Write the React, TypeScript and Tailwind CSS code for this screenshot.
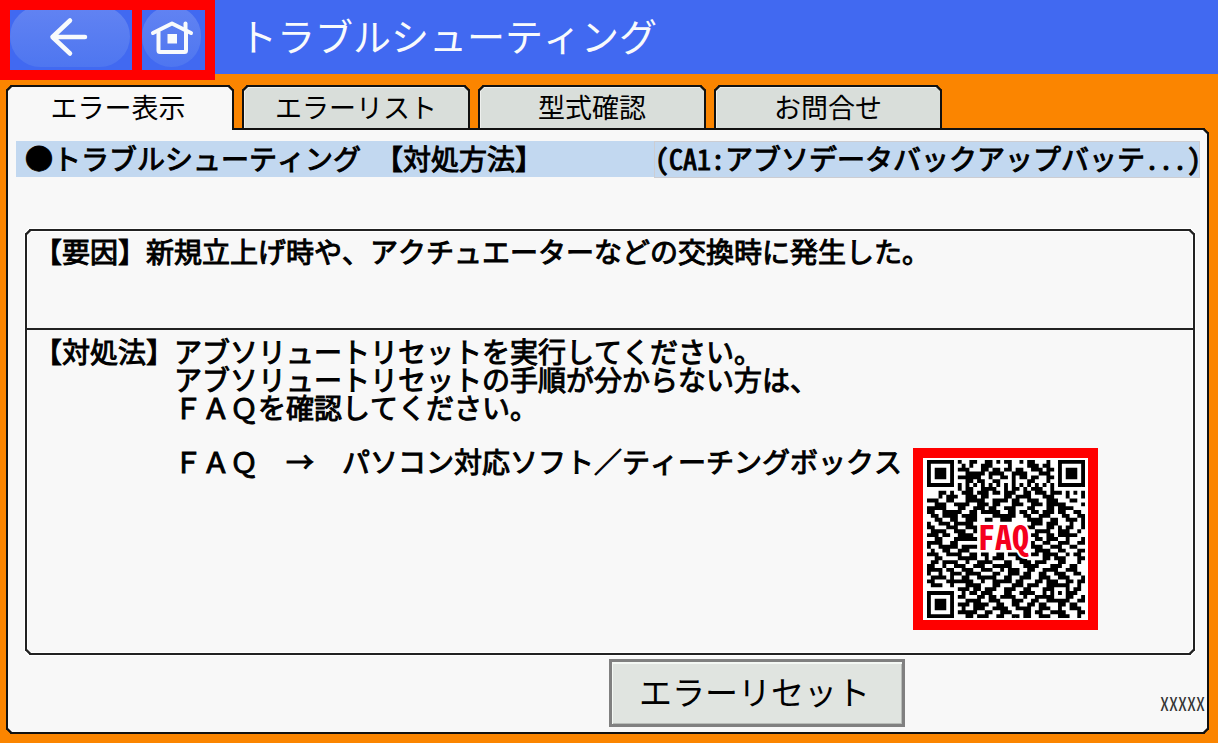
import React from "react";

const QR_ROWS = [
  "11111110100110011010110010110001001111111",
  "10000010010100111000010000111011001000001",
  "10111010111000110110110110011101101011101",
  "10111010001111101111001111000111001011101",
  "10111010111111001001101011011001101011101",
  "10000010001101100110001000110001001000001",
  "11111110101010101010101010101010101111111",
  "00000000101100111100101101011100100000000",
  "00011010011101110110111001101110111010101",
  "00010111001110110000110111100011100010001",
  "11100110001111100111101100111001110001100",
  "00111001111001110110001110011101111100001",
  "11111000110011101100111000110001101111000",
  "11001111100110111110011011011011101100110",
  "01101111011110000111111001100111000110011",
  "00110011001110011001110000111100110011101",
  "10011101111100000000000000011101110001001",
  "11000111001110000000000000110001101011001",
  "01111001110010000000000000001111001110010",
  "11101100111100000000000000011001101111100",
  "00110001111110000000000000001101110010001",
  "11110011000000000000000000010011001110011",
  "10011111011110000000000000011100111001100",
  "01001100111000000000000000001111001100011",
  "11100111100110110011011110011011110010110",
  "00110000111110010111000111000011011100011",
  "01101111001001111000110011101110001100010",
  "11001001110011100111110001111000111001100",
  "11110110011100111001011100110011110011100",
  "10010011101111000110011101100110011100110",
  "01111010011001111100110011100111001110001",
  "11000111111100100111110110001101110011011",
  "01110010001111000110001110111001111110010",
  "00000000111011011100111001100011100010110",
  "11111110010110111000110011110010101011100",
  "10000010110001101101111001001111100011001",
  "10111010001111001110001110011001111110011",
  "10111010111011110011001100110110001101100",
  "10111010010011100111100111100111001001110",
  "10000010111110011001110001101100111100011",
  "11111110001101110011001101100111001110010",
];

const QR_PATH = QR_ROWS.map((row, y) =>
  [...row].map((cell, x) => (cell === "1" ? `M${x} ${y}h1v1h-1z` : "")).join("")
).join("");

const TABS = ["エラー表示", "エラーリスト", "型式確認", "お問合せ"];

function BackIcon() {
  return (
    <svg width="40" height="42" viewBox="0 0 40 42" fill="none" stroke="#f8fafc" strokeWidth="4.500" strokeLinecap="round" strokeLinejoin="round" aria-hidden="true">
      <path d="M22 4.500 4.500 21 22 37.500M4.500 21H37" />
    </svg>
  );
}

function HomeIcon() {
  return (
    <svg width="44" height="36" viewBox="0 0 44 36" fill="none" stroke="#f8fafc" strokeWidth="4" strokeLinecap="round" strokeLinejoin="round" aria-hidden="true">
      <path d="M3 14 22 4.500 41 14" />
      <path d="M8.500 13V31.500a1.500 1.500 0 0 0 1.500 1.500H34.500a1.500 1.500 0 0 0 1.500-1.500V13" />
      <path d="M35.500 10V4.500" />
      <rect x="17.500" y="15" width="9.500" height="9.500" fill="#f8fafc" stroke="none" />
    </svg>
  );
}

function QrCode() {
  return (
    <a
      href="#faq"
      aria-label="FAQ"
      className="relative mb-[23px] flex h-[182px] w-[185px] shrink-0 items-center justify-center self-end border-10 border-[#ff0000] bg-white"
    >
      <svg width="158" height="158" viewBox="0 0 41 41" aria-hidden="true">
        <path d={QR_PATH} fill="#000" />
      </svg>
      <span className="absolute inset-0 flex items-center justify-center pr-1 pb-1.5 text-[34px] leading-none font-bold text-[#f5001d] [paint-order:stroke] [-webkit-text-stroke:4px_white]">
        FAQ
      </span>
    </a>
  );
}

export default function App() {
  return (
    <div className="flex min-h-screen flex-col bg-[#fb8500] font-['Noto_Sans_Mono_CJK_JP','Noto_Sans_CJK_JP',sans-serif] text-black">
      <header className="flex h-[74px] items-start bg-[#4169f1]">
        <nav className="z-10 flex h-20 shrink-0 gap-2.5 bg-[#ff0000] p-2.5">
          <button type="button" aria-label="戻る" className="flex w-[122px] overflow-hidden bg-[#4169f1]">
            <span className="-mt-1 flex h-[61px] w-[120px] items-center justify-center rounded-full bg-linear-to-b from-[#6283f2] to-[#4e76f0] pr-1">
              <BackIcon />
            </span>
          </button>
          <button type="button" aria-label="ホーム" className="flex w-[63px] overflow-hidden bg-[#4169f1]">
            <span className="-mt-1 flex h-[61px] w-[59px] items-center justify-center rounded-full bg-linear-to-b from-[#6283f2] to-[#4e76f0]">
              <HomeIcon />
            </span>
          </button>
        </nav>
        <h1 className="pl-6 text-[38px] leading-[70px] font-normal whitespace-nowrap text-[#f8fafc]">
          トラブルシューティング
        </h1>
      </header>

      <main className="mt-[11px] mr-[9px] mb-[9px] ml-1.5 flex flex-1 flex-col">
        <div role="tablist" className="z-10 flex gap-2">
          {TABS.map((tab, i) => (
            <button
              key={tab}
              type="button"
              role="tab"
              aria-selected={i === 0}
              className={
                i === 0
                  ? "-mb-0.5 h-[45px] w-[228px] rounded-t-[5px] border-2 border-b-0 border-[#111] bg-[#f8f8f8] pr-1 pb-1 text-[27px] leading-9 [corner-shape:bevel]"
                  : "h-[43px] w-[228px] rounded-t-[5px] border-2 border-b-0 border-[#111] bg-[#d9deda] pb-0.5 text-[27px] leading-9 shadow-[inset_1px_1px_0_#eef0ee] [corner-shape:bevel]"
              }
            >
              {tab}
            </button>
          ))}
        </div>

        <section className="flex flex-1 flex-col rounded-[5px] rounded-tl-none border-2 border-[#111] bg-[#f8f8f8] [corner-shape:bevel]">
          <div className="mr-[7px] ml-2 mt-[11px] flex h-9 bg-[#c2d8f0] text-[28px] leading-[34px] [-webkit-text-stroke:1px_black]">
            <h2 className="min-w-0 flex-1 pl-[9px] font-normal whitespace-pre">●トラブルシューティング 【対処方法】</h2>
            <p className="h-[37px] w-[546px] border border-[#cccdd2] bg-[#c2d8f0] leading-[32px] whitespace-nowrap">
              (CA1:アブソデータバックアップバッテ...)
            </p>
          </div>

          <div className="mr-3 ml-[17px] mt-[52px] flex flex-1 flex-col rounded-[5px] border-2 border-[#222] text-[28px] leading-7 shadow-[0_0_0_1px_#fff,inset_0_0_0_1px_#fff] [corner-shape:bevel] [-webkit-text-stroke:1px_black]">
            <div className="flex h-[97px] pt-1.5 pl-[7px]">
              <h3 className="font-normal">【要因】</h3>
              <p>新規立上げ時や、アクチュエーターなどの交換時に発生した。</p>
            </div>
            <div className="flex flex-1 border-t-2 border-[#222] pl-[7px]">
              <h3 className="shrink-0 pt-[7px] font-normal">【対処法】</h3>
              <div className="mr-[11px] shrink-0 pt-[7px] whitespace-nowrap">
                <p>アブソリュートリセットを実行してください。</p>
                <p>アブソリュートリセットの手順が分からない方は、</p>
                <p>ＦＡＱを確認してください。</p>
                <p className="mt-[26px]">ＦＡＱ　→　パソコン対応ソフト／ティーチングボックス</p>
              </div>
              <div className="flex [-webkit-text-stroke:0px]">
                <QrCode />
              </div>
            </div>
          </div>

          <footer className="flex items-end justify-between pt-1 pr-0.5 pb-[5px] pl-1">
            <button
              type="button"
              className="ml-[50%] h-[68px] w-[296px] border-3 border-[#808080] bg-[#e0e4e0] pr-1 pb-1 text-[33px] leading-10 shadow-[inset_1px_2px_0_#f4f8f4,inset_-1px_-1px_0_#b8bcb8]"
            >
              エラーリセット
            </button>
            <span className="pb-3 text-[18px] leading-6 text-[#333]">XXXXX</span>
          </footer>
        </section>
      </main>
    </div>
  );
}
